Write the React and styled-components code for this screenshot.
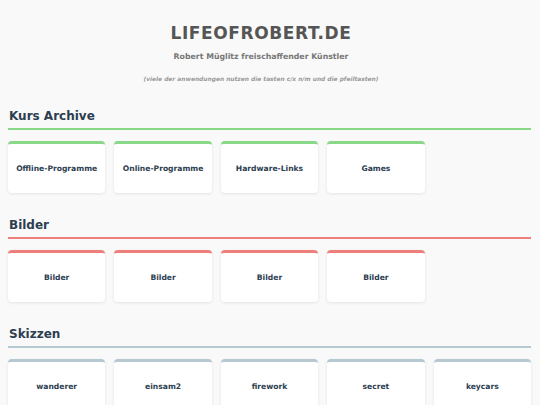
import React from "react";
import styled, { createGlobalStyle } from "styled-components";

const GlobalStyle = createGlobalStyle`
  html, body {
    margin: 0;
    padding: 0;
    background: #f9f9f9;
    font-family: "DejaVu Sans", Verdana, sans-serif;
  }
`;

const Page = styled.div`
  padding: 0 9px 0 8px;
`;

const Header = styled.header`
  text-align: center;
  padding: 23px 17px 0 0;
`;

const Title = styled.h1`
  margin: 0;
  font-size: 17px;
  line-height: 20px;
  letter-spacing: 0.6px;
  font-weight: bold;
  color: #555555;
`;

const Subtitle = styled.p`
  margin: 8px 0 0;
  font-size: 7.8px;
  line-height: 12px;
  font-weight: bold;
  color: #777777;
`;

const Hint = styled.p`
  margin: 11px 0 0;
  font-size: 5.9px;
  line-height: 10px;
  font-weight: bold;
  font-style: italic;
  color: #999999;
`;

const Section = styled.section`
  margin-top: 25px;
`;

const Heading = styled.h2`
  margin: 0;
  font-size: 12px;
  line-height: 14px;
  font-weight: bold;
  color: #2c3e50;
  padding: 0 0 5px 1px;
  border-bottom: 2px solid ${(p) => p.$color};
`;

const Grid = styled.div`
  margin-top: 11px;
  display: grid;
  grid-template-columns: repeat(5, 1fr);
  gap: 9px;
`;

const Card = styled.div`
  height: 49px;
  background: #ffffff;
  border-top: 3px solid ${(p) => p.$color};
  border-radius: 4px;
  box-shadow: 0 1px 3px rgba(0, 0, 0, 0.09);
  display: flex;
  align-items: center;
  justify-content: center;
  font-size: 7.6px;
  font-weight: bold;
  color: #2c3e50;
`;

const sections = [
  {
    title: "Kurs Archive",
    color: "#88d888",
    items: ["Offline-Programme", "Online-Programme", "Hardware-Links", "Games"],
  },
  {
    title: "Bilder",
    color: "#ee7f7a",
    items: ["Bilder", "Bilder", "Bilder", "Bilder"],
  },
  {
    title: "Skizzen",
    color: "#b6c8d2",
    items: ["wanderer", "einsam2", "firework", "secret", "keycars"],
  },
];

const App = () => {
  return (
    <>
      <GlobalStyle />
      <Page>
        <Header>
          <Title>LIFEOFROBERT.DE</Title>
          <Subtitle>Robert Müglitz freischaffender Künstler</Subtitle>
          <Hint>(viele der anwendungen nutzen die tasten c/x n/m und die pfeiltasten)</Hint>
        </Header>
        {sections.map((s) => (
          <Section key={s.title}>
            <Heading $color={s.color}>{s.title}</Heading>
            <Grid>
              {s.items.map((item, j) => (
                <Card key={j} $color={s.color}>
                  {item}
                </Card>
              ))}
            </Grid>
          </Section>
        ))}
      </Page>
    </>
  );
};

export default App;
